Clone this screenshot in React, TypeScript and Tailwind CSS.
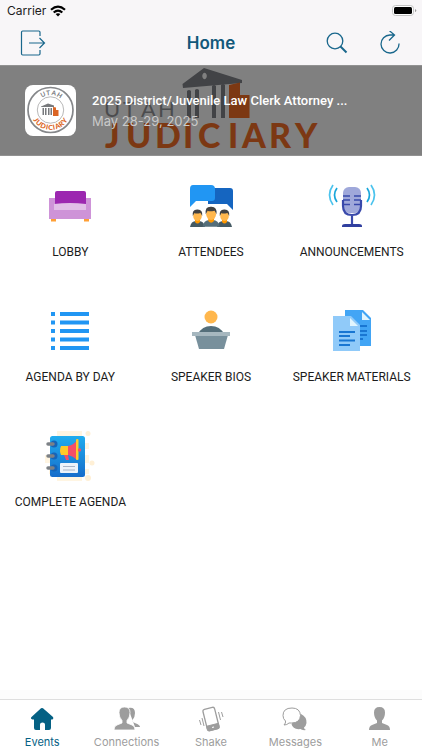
import type { ReactNode } from "react";

const Wifi = () => (
  <svg width="16" height="12" viewBox="0 0 16 12" fill="none" stroke="#000" strokeWidth="2.2">
    <path d="M1 4.8Q8-1.4 15 4.8M3.7 7.5Q8 3.8 12.3 7.5" />
    <path d="M5.6 9.1Q8 7.4 10.4 9.1L8 11.5Z" fill="#000" stroke="none" />
  </svg>
);

const Battery = () => (
  <svg width="25" height="12" viewBox="0 0 25 12">
    <rect x=".5" y=".5" width="21" height="10" rx="3" fill="#fff" stroke="#c4c4c4" />
    <rect x="2" y="2" width="18" height="7" rx="1.5" />
    <path d="M23 4v3q1.3-.5 1.3-1.5T23 4" fill="#999" />
  </svg>
);

const Exit = () => (
  <svg width="26" height="26" viewBox="0 0 26 26" fill="none" stroke="#19678c" strokeWidth="1.2">
    <path d="M20 6V2.200Q20 1 18.800 1H2.700Q1.500 1 1.500 2.200V23.800Q1.500 25 2.700 25H18.800Q20 25 20 23.800V20M9 13H24.500M19.500 8L24.500 13L19.500 18" />
  </svg>
);

const Search = () => (
  <svg width="22" height="22" viewBox="0 0 22 22" fill="none" stroke="#19678c">
    <circle cx="9" cy="9" r="7.800" strokeWidth="1.300" />
    <path d="M14.500 14.500L20.500 20.500" strokeWidth="2" />
  </svg>
);

const Refresh = () => (
  <svg width="22" height="24" viewBox="0 0 22 24" fill="none" stroke="#19678c" strokeWidth="1.300">
    <path d="M19 12.500A9 9 0 1 1 10 4H14.500M9.500 -.2L14.500 4L9 9.500" />
  </svg>
);

const SealLogo = () => (
  <svg width="51" height="51" viewBox="0 0 51 51" role="img" aria-label="Utah Judiciary seal">
    <defs>
      <path id="sealTop" d="M10 25.500A15.500 15.500 0 0 1 41 25.500" />
      <path id="sealBottom" d="M5.500 25A20 20 0 0 0 45.500 25" />
    </defs>
    <circle cx="25.500" cy="25" r="22.500" fill="#fff" stroke="#85878a" strokeWidth="1.700" />
    <circle cx="25.500" cy="25" r="13.200" fill="none" stroke="#999" strokeWidth=".7" />
    <text x="15 20 25 30" fontFamily="Lato" fontSize="6.500" fontWeight="700" fill="#77797c">
      <textPath href="#sealTop">UTAH</textPath>
    </text>
    <text x="10 14 20 26 29 34 37 42 47" fontFamily="Lato" fontSize="7" fontWeight="900" fill="#db6524">
      <textPath href="#sealBottom">JUDICIARY</textPath>
    </text>
    <path d="M16 21.500L23 18.500L29 20.500V22H16ZM17.500 23h1.500v7h-1.500ZM20 23h1.500v7H20ZM23 23h1.500v7H23ZM25.500 23H27v7h-1.500Z" fill="#77797c" />
    <path d="M28 22L31 22.500V25H33.500V31H28Z" fill="#db6524" />
  </svg>
);

const BannerLogo = () => (
  <svg className="absolute left-1/2 top-0 -translate-x-1/2" width="214" height="90" viewBox="104 65 214 90" role="img" aria-label="Utah Judiciary">
    <path fillRule="evenodd" fill="#424346" d="M182.500 83L204 67L242 79V82L183 87ZM204.500 71.800a2.300 3.200 0 1 0 .1 0Z" />
    <path d="M187 90Q189 88 191 90V117H187ZM195 89Q197 87 199 89V117H195ZM212 85Q214 83 216 85V117H212ZM221 84Q223 82 225 84V117H221Z" fill="#424346" />
    <path d="M229 84L240 81.500V94H249.500V117H229Z" fill="#7c3813" />
    <text x="104 123 141 158" y="116" fontFamily="Lato" fontWeight="400" fontSize="22" fill="#4b4c4e">UTAH</text>
    <text x="105 126 155 183 198 228 242 269 295" y="147" fontFamily="Lato" fontWeight="900" fontSize="34" fill="#7c3813">JUDICIARY</text>
  </svg>
);

const Sofa = () => (
  <svg width="50" height="50" viewBox="0 0 50 50">
    <path d="M4 17H46V38H4Z" fill="#ce93d8" />
    <path d="M10 24V12Q10 10 12 10H39Q41 10 41 12V24Z" fill="#9c27b0" />
    <path d="M9 23Q25 21 41 23V29H9Z" fill="#e1bee7" />
    <path d="M6 38H11V40.500H6ZM39 38H44V40.500H39Z" fill="#ff9f35" />
  </svg>
);

const Person = ({ body }: { body: string }) => (
  <>
    <path d="M0 19Q1 13 6 13H9Q14 13 15 19Z" fill={body} />
    <path d="M5 11H10V14Q7.500 17 5 14Z" fill="#ff9800" />
    <ellipse cx="7.500" cy="8" rx="4.300" ry="5" fill="#ffb74d" />
    <path d="M2.800 8Q1.800 1.500 7 1.500Q13 1 12.200 8L10.500 5Q6 6 4.500 5Z" fill="#424242" />
  </>
);

const Attendees = () => (
  <svg width="50" height="50" viewBox="0 0 50 50">
    <path d="M22 7H44Q47 7 47 10V29L41 23H22Z" fill="#1565c0" />
    <path d="M7 4H25Q29 4 29 8V17Q29 20 26 20H10L4 26V8Q4 4 7 4Z" fill="#2196f3" />
    <g transform="translate(4 27)"><Person body="#455a64" /></g>
    <g transform="translate(31 27)"><Person body="#455a64" /></g>
    <g transform="translate(16.500 24) scale(1.150)"><Person body="#546e7a" /></g>
  </svg>
);

const Microphone = () => (
  <svg width="50" height="50" viewBox="0 0 50 50">
    <rect x="16" y="6" width="18" height="26" rx="6" fill="#9fa8da" />
    <path d="M16 15H23M27 15H34M16 19H23M27 19H34M16 23.500H23M27 23.500H34" stroke="#3949ab" strokeWidth="1.600" />
    <path d="M16 19V25Q16 34 25 34T34 25V19M25 34V43" stroke="#3949ab" strokeWidth="2.200" fill="none" />
    <path d="M15 46V45Q15 43 18 43H32Q35 43 35 45V46Z" fill="#303f9f" />
    <path d="M10 7Q5 14 10 21M40 7Q45 14 40 21" fill="none" stroke="#18a6da" strokeWidth="1.700" />
    <path d="M6 4Q-1 14 6 24M44 4Q51 14 44 24" fill="none" stroke="#4bc3ed" strokeWidth="1.700" />
  </svg>
);

const Agenda = () => (
  <svg width="50" height="50" viewBox="0 0 50 50">
    <path d="M6 6h4v4H6Zm9 0h29v4H15ZM6 14.500h4v4H6Zm9 0h29v4H15ZM6 23h4v4H6Zm9 0h29v4H15ZM6 31.500h4v4H6Zm9 0h29v4H15ZM6 40h4v4H6Zm9 0h29v4H15Z" fill="#2196f3" />
  </svg>
);

const Speaker = () => (
  <svg width="50" height="50" viewBox="0 0 50 50">
    <circle cx="25" cy="11" r="6.500" fill="#ffb74d" />
    <path d="M12 28Q16 20 25 20T38 28Z" fill="#546e7a" />
    <path d="M9 29H42L38 43H13Z" fill="#78909c" />
    <path d="M6 26H44V30H6Z" fill="#a6b7bf" />
  </svg>
);

const Documents = () => (
  <svg width="50" height="50" viewBox="0 0 50 50">
    <path d="M18 4H36L44 12V40H18Z" fill="#42a5f5" />
    <path d="M35 6V14H43Z" fill="#e1f5fe" />
    <path d="M30 20H40M30 25H40M30 29H40M30 33H36" stroke="#1976d2" strokeWidth="2" />
    <path d="M6 10H24L33 19V45H6Z" fill="#90caf9" />
    <path d="M23 12V20H31Z" fill="#e1f5fe" />
    <path d="M12 26H28M12 30H23M12 34.500H28M12 39H23" stroke="#1976d2" strokeWidth="2" />
  </svg>
);

const Notebook = () => (
  <svg width="50" height="54" viewBox="0 0 50 54">
    <defs>
      <linearGradient id="cover" x1="0" y1="0" x2="0" y2="1">
        <stop stopColor="#20acee" /><stop offset="1" stopColor="#176dcb" />
      </linearGradient>
    </defs>
    <path d="M12 2H37V52H12Z" fill="#fff5e2" />
    <path d="M6 14H44V20H6ZM0 26H44V34H0ZM4 40H44V45H4Z" fill="#fff5e2" />
    <circle cx="43" cy="4.500" r="2.500" fill="#fff0d6" />
    <circle cx="47" cy="34" r="2.500" fill="#fff0d6" />
    <circle cx="43" cy="49" r="3" fill="#fff0d6" />
    <rect x="5" y="7" width="35" height="41" rx="2.500" fill="url(#cover)" />
    <path d="M16 17H24V26H16Q14 21.500 16 17Z" fill="#ffca28" />
    <path d="M23 17Q29 16 32 11V31Q28 27 23 26ZM19 26H23L24 31H21Z" fill="#f44e67" />
    <rect x="31" y="10" width="2.500" height="21" rx="1" fill="#ffca28" />
    <circle cx="34.500" cy="21" r="1.700" fill="#f44e67" />
    <rect x="15" y="34" width="18" height="10" rx="1" fill="#edf3fa" />
    <path d="M18 37.500H30M18 41H30" stroke="#a9b4c6" />
    {[15, 27, 39].map((y) => (
      <g key={y}>
        <circle cx="9" cy={y} r="3.500" fill="#1764b7" />
        <path d={`M3 ${y}H8`} stroke="#7d8186" strokeWidth="3.500" strokeLinecap="round" />
      </g>
    ))}
  </svg>
);

const bust = "M0 24Q0 20 3 19L8 17V14.500Q5 11.500 5 6.500Q5 1 10.500 1T16 6.500Q16 11.500 13 14.500V17L18 19Q21 20 21 24Z";

const HomeIcon = () => (
  <svg width="26" height="26" viewBox="0 0 26 26">
    <path d="M12 2.300Q13 1.500 14 2.300L24 11Q25 12.200 23.500 13.500H22V22Q22 24 20 24H16V18.500Q16 16.500 13.500 16.500T11 18.500V24H7Q5 24 5 22V13.500H3.500Q1 12.500 2.500 11Z" fill="#056184" />
  </svg>
);
const People = () => (
  <svg width="26" height="26" viewBox="0 0 26 26" fill="#9d9d9d">
    <path d="M14 2Q21 .5 21 7Q21 11 18.500 14Q18 16 22 17.500Q26 19 26 21H21Z" />
    <path d={bust} stroke="#fff" strokeWidth=".8" />
  </svg>
);
const Shake = () => (
  <svg width="26" height="26" viewBox="0 0 26 26" fill="none" stroke="#9d9d9d">
    <g transform="rotate(-14 13 13)">
      <rect x="7" y="2" width="12" height="22" rx="2" fill="#fff" strokeWidth="1.300" />
      <path d="M7 19H19V22Q19 24 17 24H9Q7 24 7 22Z" fill="#9d9d9d" />
      <path d="M12 21.500H14" stroke="#fff" />
    </g>
    <path d="M4 12L6 20M1.500 14L3 19M20.500 6L22.500 14M23.500 6L25 11" />
  </svg>
);
const Messages = () => (
  <svg width="26" height="26" viewBox="0 0 26 26">
    <path d="M19 8Q25 11 24.500 17Q24 20 22 21.500Q22 23 24 24Q20 24.500 18.500 23Q11 24 9.500 18Z" fill="#9d9d9d" />
    <path d="M10 2Q18 2 18.500 9.500Q18 17 9.500 17H7Q5 19 2 19Q4 17 3.500 15Q1 13 1 9.500Q1 2 10 2Z" fill="#fff" stroke="#9d9d9d" />
  </svg>
);
const Me = () => (
  <svg width="26" height="26" viewBox="-2 0 26 26" fill="#9d9d9d"><path d={bust} /></svg>
);

const tiles: { label: string; icon: ReactNode }[] = [
  { label: "LOBBY", icon: <Sofa /> },
  { label: "ATTENDEES", icon: <Attendees /> },
  { label: "ANNOUNCEMENTS", icon: <Microphone /> },
  { label: "AGENDA BY DAY", icon: <Agenda /> },
  { label: "SPEAKER BIOS", icon: <Speaker /> },
  { label: "SPEAKER MATERIALS", icon: <Documents /> },
  { label: "COMPLETE AGENDA", icon: <Notebook /> },
];

const tabs: { label: string; icon: ReactNode }[] = [
  { label: "Events", icon: <HomeIcon /> },
  { label: "Connections", icon: <People /> },
  { label: "Shake", icon: <Shake /> },
  { label: "Messages", icon: <Messages /> },
  { label: "Me", icon: <Me /> },
];

export default function App() {
  return (
    <div className="flex min-h-screen flex-col bg-white font-['Inter',sans-serif] text-[#1c1c1c]">
      <header className="bg-[#f8f6f8]">
        <div className="flex h-[21px] items-center justify-between pl-[7px] pr-[5px] text-[12px] leading-4">
          <div className="flex items-center gap-1"><span>Carrier</span><Wifi /></div>
          <Battery />
        </div>
        <div className="grid h-11 grid-cols-3 items-center px-5">
          <button aria-label="Exit event" className="justify-self-start"><Exit /></button>
          <h1 className="text-center text-[17px] font-semibold leading-6 text-[#12587a]">Home</h1>
          <div className="flex items-center justify-end gap-8">
            <button aria-label="Search"><Search /></button>
            <button aria-label="Refresh"><Refresh /></button>
          </div>
        </div>
      </header>
      <section className="relative h-[91px] border-y border-[#929292] bg-[#808080]">
        <BannerLogo />
        <div className="relative flex h-full items-center gap-4 px-[25px]">
          <div className="shrink-0 rounded-lg bg-white"><SealLogo /></div>
          <div className="min-w-0">
            <h2 className="truncate font-['Roboto',sans-serif] text-[13px] font-medium leading-5 text-white">2025 District/Juvenile Law Clerk Attorney ...</h2>
            <p className="text-[13px] leading-5 text-[#c9c9c9]">May 28-29, 2025</p>
          </div>
        </div>
      </section>
      <main className="grid flex-1 auto-rows-[125px] grid-cols-3 pt-6">
        {tiles.map((tile) => (
          <button key={tile.label} className="flex flex-col items-center">
            <span className="flex h-[52px] items-center justify-center">{tile.icon}</span>
            <span className="mt-3 whitespace-nowrap font-['Roboto',sans-serif] text-[12px] leading-4">{tile.label}</span>
          </button>
        ))}
      </main>
      <div className="h-[9px] bg-[#fcfcfc]" />
      <nav className="grid h-[51px] grid-cols-5 border-t border-[#dedede]">
        {tabs.map((tab, i) => (
          <a key={tab.label} href="#" aria-current={i === 0 ? "page" : undefined} className={`flex flex-col items-center pt-[6px] ${i === 0 ? "text-[#056184]" : "text-[#9d9d9d]"}`}>
            {tab.icon}
            <span className="mt-[2px] text-[11px] leading-4">{tab.label}</span>
          </a>
        ))}
      </nav>
    </div>
  );
}
